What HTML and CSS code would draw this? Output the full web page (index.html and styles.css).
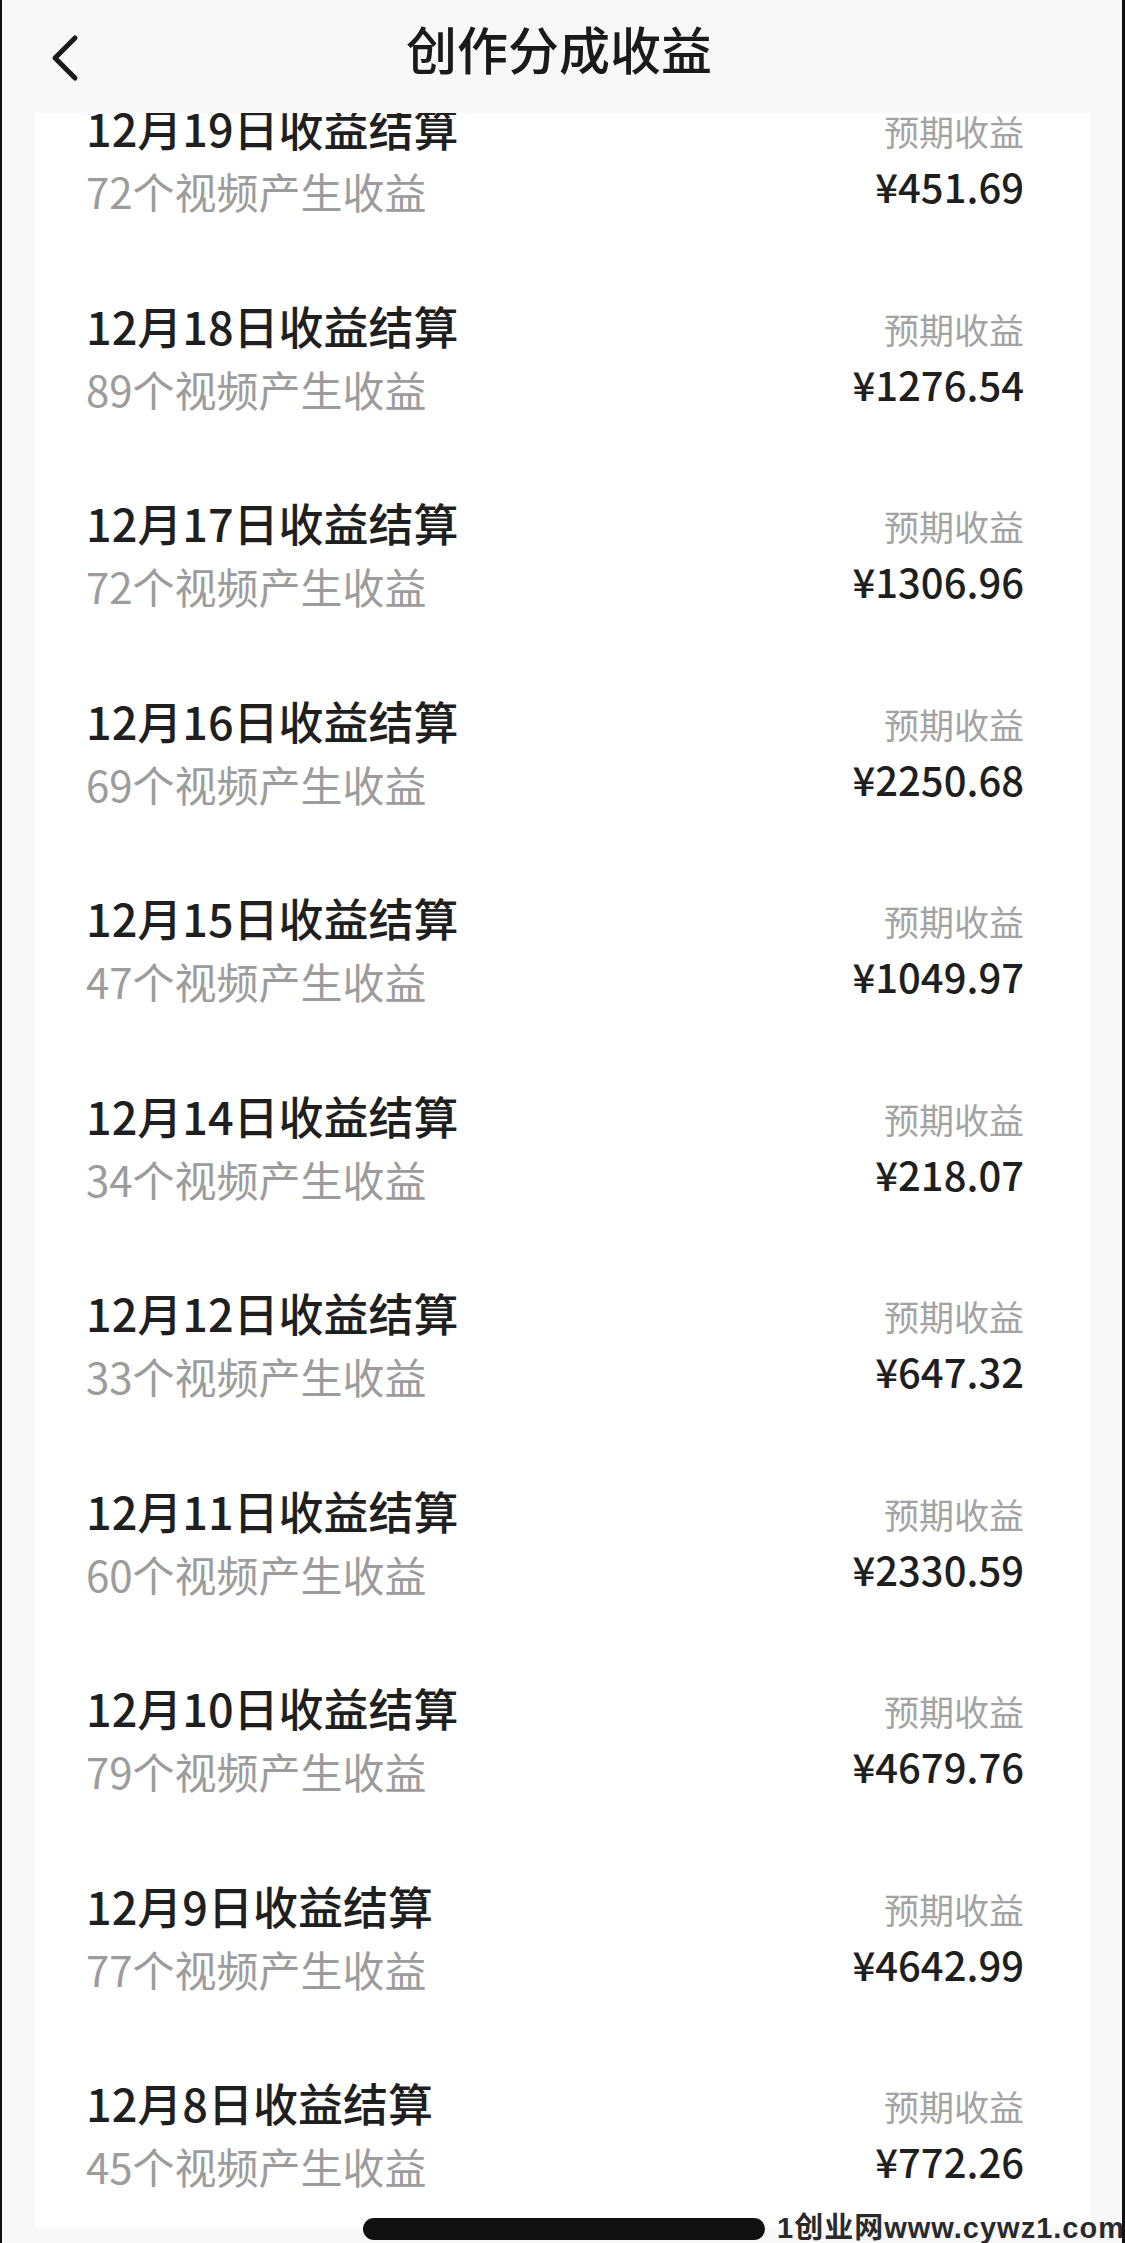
FILE: index.html
```html
<!DOCTYPE html>
<html lang="zh-CN">

<head>
    <meta charset="UTF-8">
    <meta name="viewport" content="width=device-width, initial-scale=1.0">
    <title>创作分成收益</title>
    <link rel="stylesheet" href="styles.css">
</head>

<body>
    <div class="phone">
        <!-- 顶部导航 -->
        <div class="nav-bar">
            <span class="back-btn">
                <svg width="34" height="48" viewBox="0 0 34 48">
                    <path d="M27 4 L7 24 L27 44" fill="none" stroke="#1a1a1a" stroke-width="5" stroke-linecap="round" stroke-linejoin="round"/>
                </svg>
            </span>
            <h1 class="nav-title">创作分成收益</h1>
        </div>

        <!-- 收益列表 -->
        <div class="scroll-area">
            <div class="card">
                <ul class="income-list">
                    <li class="income-row">
                        <div class="row-left">
                            <div class="row-title">12月19日收益结算</div>
                            <div class="row-sub">72个视频产生收益</div>
                        </div>
                        <div class="row-right">
                            <div class="row-label">预期收益</div>
                            <div class="row-amount">¥451.69</div>
                        </div>
                    </li>
                    <li class="income-row">
                        <div class="row-left">
                            <div class="row-title">12月18日收益结算</div>
                            <div class="row-sub">89个视频产生收益</div>
                        </div>
                        <div class="row-right">
                            <div class="row-label">预期收益</div>
                            <div class="row-amount">¥1276.54</div>
                        </div>
                    </li>
                    <li class="income-row">
                        <div class="row-left">
                            <div class="row-title">12月17日收益结算</div>
                            <div class="row-sub">72个视频产生收益</div>
                        </div>
                        <div class="row-right">
                            <div class="row-label">预期收益</div>
                            <div class="row-amount">¥1306.96</div>
                        </div>
                    </li>
                    <li class="income-row">
                        <div class="row-left">
                            <div class="row-title">12月16日收益结算</div>
                            <div class="row-sub">69个视频产生收益</div>
                        </div>
                        <div class="row-right">
                            <div class="row-label">预期收益</div>
                            <div class="row-amount">¥2250.68</div>
                        </div>
                    </li>
                    <li class="income-row">
                        <div class="row-left">
                            <div class="row-title">12月15日收益结算</div>
                            <div class="row-sub">47个视频产生收益</div>
                        </div>
                        <div class="row-right">
                            <div class="row-label">预期收益</div>
                            <div class="row-amount">¥1049.97</div>
                        </div>
                    </li>
                    <li class="income-row">
                        <div class="row-left">
                            <div class="row-title">12月14日收益结算</div>
                            <div class="row-sub">34个视频产生收益</div>
                        </div>
                        <div class="row-right">
                            <div class="row-label">预期收益</div>
                            <div class="row-amount">¥218.07</div>
                        </div>
                    </li>
                    <li class="income-row">
                        <div class="row-left">
                            <div class="row-title">12月12日收益结算</div>
                            <div class="row-sub">33个视频产生收益</div>
                        </div>
                        <div class="row-right">
                            <div class="row-label">预期收益</div>
                            <div class="row-amount">¥647.32</div>
                        </div>
                    </li>
                    <li class="income-row">
                        <div class="row-left">
                            <div class="row-title">12月11日收益结算</div>
                            <div class="row-sub">60个视频产生收益</div>
                        </div>
                        <div class="row-right">
                            <div class="row-label">预期收益</div>
                            <div class="row-amount">¥2330.59</div>
                        </div>
                    </li>
                    <li class="income-row">
                        <div class="row-left">
                            <div class="row-title">12月10日收益结算</div>
                            <div class="row-sub">79个视频产生收益</div>
                        </div>
                        <div class="row-right">
                            <div class="row-label">预期收益</div>
                            <div class="row-amount">¥4679.76</div>
                        </div>
                    </li>
                    <li class="income-row">
                        <div class="row-left">
                            <div class="row-title">12月9日收益结算</div>
                            <div class="row-sub">77个视频产生收益</div>
                        </div>
                        <div class="row-right">
                            <div class="row-label">预期收益</div>
                            <div class="row-amount">¥4642.99</div>
                        </div>
                    </li>
                    <li class="income-row">
                        <div class="row-left">
                            <div class="row-title">12月8日收益结算</div>
                            <div class="row-sub">45个视频产生收益</div>
                        </div>
                        <div class="row-right">
                            <div class="row-label">预期收益</div>
                            <div class="row-amount">¥772.26</div>
                        </div>
                    </li>
                </ul>
            </div>
        </div>

        <!-- 底部横条 + 水印 -->
        <div class="home-bar"></div>
        <div class="watermark">1创业网www.cywz1.com</div>
    </div>
</body>

</html>
```

FILE: styles.css
```css
/* 公共样式 */
* {
    box-sizing: border-box;
}

body {
    margin: 0;
    font-family: "Noto Sans CJK SC", "Noto Sans", sans-serif;
    background: #f8f8f8;
    overflow: hidden;
}

.phone {
    position: relative;
    height: 2243px;
    display: flex;
    flex-direction: column;
    background: #f8f8f8;
    border-left: 2px solid #111;
    border-right: 3px solid #111;
    overflow: hidden;
}

/* 顶部导航 */
.nav-bar {
    flex: 0 0 113px;
    display: flex;
    align-items: center;
    justify-content: center;
    position: relative;
    padding-bottom: 18px;
    background: #f8f8f8;
    z-index: 2;
}

.back-btn {
    position: absolute;
    left: 46px;
    top: 34px;
    display: flex;
}

.nav-title {
    margin: 0 0 0 -6px;
    font-size: 51px;
    font-weight: 500;
    color: #1a1a1a;
}

/* 列表 */
.scroll-area {
    flex: 1;
    overflow: hidden;
    padding: 0 31px 0 33px;
}

.card {
    background: #fff;
    height: 100%;
    padding: 0 67px 0 51px;
}

.income-list {
    list-style: none;
    margin: -16px 0 0;
    padding: 0;
}

.income-row {
    height: 197.5px;
    display: flex;
    justify-content: space-between;
    align-items: flex-start;
}

.row-title {
    font-size: 45px;
    line-height: 62px;
    color: #1f1f1f;
    font-weight: 500;
}

.row-sub {
    font-size: 42px;
    line-height: 64px;
    color: #9c9c9c;
}

.row-right {
    padding-top: 6px;
    text-align: right;
}

.row-label {
    font-size: 35px;
    line-height: 56px;
    color: #a3a3a3;
}

.row-amount {
    font-size: 40px;
    line-height: 54px;
    color: #1f1f1f;
    font-weight: 500;
}

/* 底部 */
.home-bar {
    position: absolute;
    left: 361px;
    bottom: 3px;
    width: 402px;
    height: 22px;
    border-radius: 11px;
    background: #111;
}

.watermark {
    position: absolute;
    right: -3px;
    bottom: 0;
    font-family: "Liberation Sans", "Noto Sans CJK SC", sans-serif;
    font-size: 29px;
    line-height: 30px;
    font-weight: bold;
    color: #2a2a2a;
    letter-spacing: 1px;
}
```
